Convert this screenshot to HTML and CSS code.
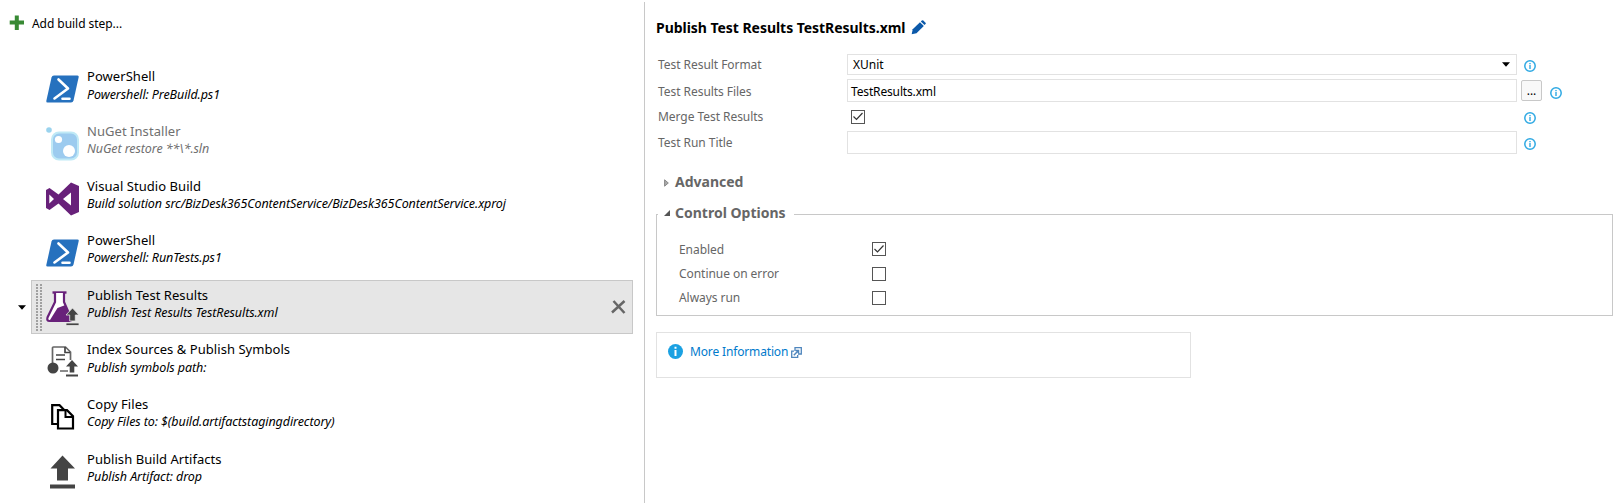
FILE: index.html
```html
<!DOCTYPE html>
<html lang="en">
<head>
<meta charset="utf-8">
<title>Build definition</title>
<link rel="stylesheet" href="styles.css">
</head>
<body>
<svg class="defs" width="0" height="0">
  <symbol id="powershell" viewBox="0 0 33 28">
    <path d="M8 .5h23.500q1.500 0 1.200 1.500L27.500 25.500Q27 27.500 25 27.500H1.500Q0 27.500.3 26L5.500 2.500Q6 .5 8 .5Z" fill="#2671be"/>
    <path d="M12.500 4.500l9.500 9L8.500 23.500M16.500 23.800h7" fill="none" stroke="#fff" stroke-width="2.600" stroke-linecap="round" stroke-linejoin="round"/>
  </symbol>
  <symbol id="info" viewBox="0 0 12 12">
    <circle cx="6" cy="6" r="5.200" fill="#fff" stroke="#2fa9e3" stroke-width="1.500"/>
    <path d="M6 5v4M6 3v1.200" stroke="#2fa9e3" stroke-width="1.400"/>
  </symbol>
</svg>
<div class="page">
  <section class="steps">
    <div class="add">
      <svg width="16" height="16" viewBox="0 0 16 16"><path d="M5.800.5h4v5h5.200v4H9.800v5.500h-4V9.500H.7v-4h5.100Z" fill="#388a34"/></svg>
      <span class="t-add">Add build step...</span>
    </div>
    <ul class="list">
      <li class="step">
        <svg class="ico" width="33" height="34" viewBox="0 0 33 34"><use href="#powershell" y="3" width="33" height="28"/></svg>
        <div class="text"><b>PowerShell</b><i>Powershell: PreBuild.ps1</i></div>
      </li>
      <li class="step off">
        <svg class="ico" width="33" height="34" viewBox="0 0 33 34"><circle cx="3" cy="3" r="2.800" fill="#9ad3ee"/><rect x="6" y="5.500" width="26" height="27" rx="7" fill="#9ccbef" stroke="#bfe9f6" stroke-width="2"/><circle cx="12.500" cy="12.500" r="3.600" fill="#fff"/><circle cx="23" cy="24" r="6" fill="#fff"/></svg>
        <div class="text"><b>NuGet Installer</b><i>NuGet restore **\*.sln</i></div>
      </li>
      <li class="step">
        <svg class="ico" width="33" height="34" viewBox="0 0 33 34"><path fill-rule="evenodd" d="M25 .5l8 3.500v26l-8 3.500-12.500-12L3.500 28 0 26V8l3.500-2 9 6.500ZM25 10.500L17 17l8 6.500ZM3.300 12.500v9L8 17Z" fill="#68217a"/></svg>
        <div class="text"><b>Visual Studio Build</b><i>Build solution src/BizDesk365ContentService/BizDesk365ContentService.xproj</i></div>
      </li>
      <li class="step">
        <svg class="ico" width="33" height="34" viewBox="0 0 33 34"><use href="#powershell" y="3" width="33" height="28"/></svg>
        <div class="text"><b>PowerShell</b><i>Powershell: RunTests.ps1</i></div>
      </li>
      <li class="step selected">
        <svg class="caret" width="8" height="5" viewBox="0 0 8 5"><path d="M0 .3h8L4 4.800Z" fill="#000"/></svg>
        <span class="grip"></span>
        <svg class="ico" width="33" height="34" viewBox="0 0 33 34"><path d="M6.500 1.500h14" stroke="#68217a" stroke-width="2.400"/><path d="M9 2v9L1.500 26.500q-1 3.500 2 3.500h20q2.500 0 1.500-3L18 11V2" fill="#fff" stroke="#68217a" stroke-width="2.200"/><path d="M11.500 17l8-3 5 15H4Z" fill="#68217a"/><path d="M26.500 17l6.500 7h-3.700v6h-5.600v-6H20ZM20 32h13v2.500H20Z" fill="#444" stroke="#e6e6e6" stroke-width=".8"/></svg>
        <div class="text"><b>Publish Test Results</b><i>Publish Test Results TestResults.xml</i></div>
        <svg class="close" width="15" height="14" viewBox="0 0 15 14"><path d="M1 12.500L13.500 1M2.500 1l11 12" stroke="#666" stroke-width="2.500"/></svg>
      </li>
      <li class="step">
        <svg class="ico" width="33" height="34" viewBox="0 0 33 34"><path d="M6.500 18V3q0-1 1-1h12l5 5v8M14 26h8" fill="none" stroke="#666" stroke-width="1.700"/><path d="M19 2v5.500h5M10 10h9M10 14.500h9" fill="none" stroke="#444" stroke-width="1.700"/><circle cx="7" cy="23" r="5.500" fill="#444"/><path d="M26 15l6 6.500h-3.700v6h-4.600v-6H20ZM20 29.500h12v2H20Z" fill="#444"/></svg>
        <div class="text"><b>Index Sources &amp; Publish Symbols</b><i>Publish symbols path:</i></div>
      </li>
      <li class="step">
        <svg class="ico" width="33" height="34" viewBox="0 0 33 34"><path d="M11.500 24H6.200V5.200h7.300l4.500 4.500" fill="none" stroke="#000" stroke-width="2.200"/><path d="M12 10.200h9l6 6v12.300H12Z" fill="#fff" stroke="#000" stroke-width="2.200"/><path d="M19.500 10v7H27" fill="none" stroke="#000" stroke-width="2"/></svg>
        <div class="text"><b>Copy Files</b><i>Copy Files to: $(build.artifactstagingdirectory)</i></div>
      </li>
      <li class="step">
        <svg class="ico" width="33" height="34" viewBox="0 0 33 34"><path d="M16.500.5l12.500 13h-7v12H11v-12H4.500ZM4 29.500h25v4H4Z" fill="#444"/></svg>
        <div class="text"><b>Publish Build Artifacts</b><i>Publish Artifact: drop</i></div>
      </li>
    </ul>
  </section>
  <section class="detail">
    <h1 class="title"><span>Publish Test Results TestResults.xml</span>
      <svg width="15" height="15" viewBox="0 0 15 15"><path d="M.7 14.300l1-5L9 2.200l3.800 3.800L5.500 13.300Z" fill="#0b59a9"/><path d="M9.800 1.500l1-1q.8-.6 1.500 0l2.200 2.200q.6.700 0 1.400l-1 1Z" fill="#0b59a9"/></svg>
    </h1>
    <div class="form">
      <div class="row r1"><label>Test Result Format</label><div class="field select"><span>XUnit</span><svg width="8" height="5" viewBox="0 0 8 5"><path d="M0 .3h8L4 4.800Z"/></svg></div><svg class="info" width="12" height="12"><use href="#info"/></svg></div>
      <div class="row r2"><label>Test Results Files</label><div class="field"><span>TestResults.xml</span></div><button class="browse">...</button><svg class="info" width="12" height="12"><use href="#info"/></svg></div>
      <div class="row r3"><label>Merge Test Results</label><div class="cell"><span class="check"><svg width="12" height="11" viewBox="0 0 12 11"><path d="M1.500 5.500l3 3L10.500 2" fill="none" stroke="#333" stroke-width="1.200"/></svg></span></div><svg class="info" width="12" height="12"><use href="#info"/></svg></div>
      <div class="row r4"><label>Test Run Title</label><div class="field"></div><svg class="info" width="12" height="12"><use href="#info"/></svg></div>
    </div>
    <h2 class="advanced"><svg width="5" height="8" viewBox="0 0 5 8"><path d="M.6.8v6.400L4.300 4Z" fill="#aaa" stroke="#888"/></svg><span>Advanced</span></h2>
    <div class="group">
      <h2 class="legend"><svg width="6" height="6" viewBox="0 0 6 6"><path d="M6 0v6H0Z" fill="#555"/></svg><span>Control Options</span></h2>
      <div class="opt"><label>Enabled</label><span class="check"><svg width="12" height="12" viewBox="0 0 12 12"><path d="M1.500 6l3 3L10.500 2.500" fill="none" stroke="#333" stroke-width="1.200"/></svg></span></div>
      <div class="opt"><label>Continue on error</label><span class="check"></span></div>
      <div class="opt"><label>Always run</label><span class="check"></span></div>
    </div>
    <div class="more">
      <svg width="15" height="15" viewBox="0 0 15 15"><circle cx="7.500" cy="7.500" r="7.500" fill="#1ba1e2"/><path d="M7.500 6v6M7.500 2.800v2" fill="none" stroke="#fff" stroke-width="2"/></svg>
      <a>More Information</a>
      <svg class="ext" width="11" height="11" viewBox="0 0 11 11"><path d="M3 4.200H.7v6.100h6V8" fill="none" stroke="#4f86bd" stroke-width="1.300"/><path d="M4 4V.7h6.300v6.300H7" fill="none" stroke="#4f86bd" stroke-width="1.300"/><path d="M2.800 8.200L7 4M4.500 3.500h3v3" fill="none" stroke="#4f86bd" stroke-width="1.500"/></svg>
    </div>
  </section>
</div>
</body>
</html>
```
FILE: styles.css
```css
* { box-sizing: border-box; }
body { margin: 0; background: #fff; color: #000; font-family: "Noto Sans", "Open Sans", sans-serif; font-size: 12px; overflow: hidden; }
.defs { position: absolute; }
svg { flex: none; display: block; }
.page { display: flex; width: 1620px; height: 503px; }

.steps { width: 644px; padding-top: 15px; }
.add { display: flex; align-items: center; height: 16px; padding-left: 9px; gap: 7px; white-space: nowrap; }
.t-add { letter-spacing: -0.05px; }
.list { list-style: none; margin: 0; padding: 30.300px 10px 0 31px; }
.step { position: relative; display: flex; height: 54.640px; padding: 10px 0 0 14px; border: 1px solid transparent; width: 602px; }
.ico { overflow: visible; }
.text { display: flex; flex-direction: column; margin: -6px 0 0 8px; white-space: nowrap; }
.text b { font-weight: 400; font-size: 13px; line-height: 20px; letter-spacing: 0.05px; }
.text i { font-size: 12.500px; line-height: 16px; letter-spacing: -0.09px; padding-top: 0.300px; }
.off .text { color: #707070; }
.selected { background: #e6e6e6; border-color: #c8c8c8; padding-left: 4px; }
.caret { position: absolute; left: -14px; top: 24px; }
.grip { width: 6px; height: 47px; margin: -7px 4px 0 0; background: repeating-linear-gradient(to bottom, transparent 0 2px, #e6e6e6 2px 3px), repeating-linear-gradient(to right, #a0a0a0 0 2px, #e6e6e6 2px 4px); }
.close { margin: 9px 6px 0 auto; }

.detail { flex: 1; margin-top: 2px; border-left: 1px solid #c8c8c8; padding: 16px 7px 0 11px; }
.title { display: flex; align-items: center; gap: 6px; height: 18px; margin: 0; font-size: 14px; font-weight: 700; letter-spacing: -0.04px; white-space: nowrap; }
.form { display: flex; flex-direction: column; padding-top: 18px; }
.row { display: flex; align-items: center; }
.row label, .opt label { color: #666; letter-spacing: -0.05px; white-space: nowrap; }
.row label { width: 191px; padding-left: 2px; }
.r1 { height: 21px; margin-bottom: 4px; }
.r2 { height: 23px; margin-bottom: 4px; }
.r2 label, .r2 .field { padding-top: 2px; }
.r3 { height: 21px; margin-bottom: 4px; }
.r4 { height: 23px; }
.field { display: flex; align-items: center; align-self: stretch; width: 670px; padding: 0 3px; border: 1px solid #e2e2e2; letter-spacing: -0.15px; }
.select { justify-content: space-between; padding: 0 6px 0 5px; letter-spacing: 0; }
.cell { width: 670px; padding-left: 4px; }
.check { display: block; width: 14px; height: 14px; border: 1px solid #555; }
.info { margin: 2px 0 0 6.500px; }
.browse { width: 21px; height: 21px; margin-left: 4px; padding: 0; border: 1px solid #c8c8c8; border-radius: 2px; background: #f8f8f8; font: 12px "Noto Sans", sans-serif; line-height: 18px; }
.browse + .info { margin: 4px 0 0 8px; }
h2 { display: flex; align-items: center; margin: 0; color: #666; font-size: 14px; font-weight: 700; white-space: nowrap; }
.advanced { height: 20px; margin-top: 17px; padding-left: 8px; gap: 6px; }
.advanced svg { margin-top: 4px; }
.group { height: 102px; margin-top: 23px; border: 1px solid #c8c8c8; padding-left: 22px; }
.legend { width: 136px; height: 20px; margin: -13px 0 15px -21px; padding-left: 6px; gap: 5px; background: #fff; }
.legend svg { margin-top: 2px; }
.opt { display: flex; align-items: center; height: 24.400px; }
.opt label { width: 193px; }
.more { display: flex; align-items: flex-start; width: 535px; height: 46px; margin-top: 16px; padding: 11px 0 0 11px; border: 1px solid #e2e2e2; }
.more a { margin: 0 3px 0 7px; line-height: 16px; letter-spacing: -0.15px; color: #007acc; white-space: nowrap; }
.ext { margin-top: 3px; }
```
